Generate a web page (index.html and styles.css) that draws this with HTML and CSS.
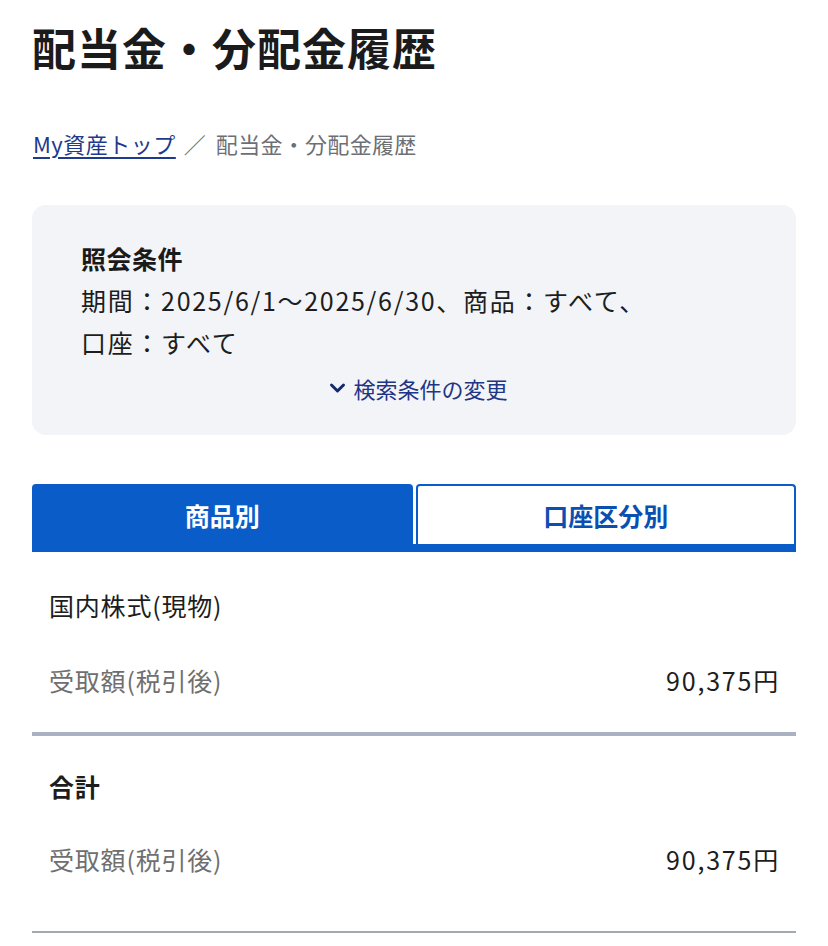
FILE: index.html
```html
<!DOCTYPE html>
<html lang="ja">
<head>
<meta charset="utf-8">
<title>配当金・分配金履歴</title>
<link rel="stylesheet" href="styles.css">
</head>
<body>
<main class="page">
  <h1 class="title">配当金・分配金履歴</h1>
  <nav class="crumbs">
    <a class="crumb-link" href="#">My資産トップ</a>
    <span class="crumb-sep">／</span>
    <span class="crumb-current">配当金・分配金履歴</span>
  </nav>

  <section class="cond">
    <div class="cond-head">照会条件</div>
    <div class="cond-text">期間：2025/6/1〜2025/6/30、商品：すべて、<br>口座：すべて</div>
    <div class="cond-action">
      <a class="cond-link" href="#">
        <svg class="chev" width="17" height="12" viewBox="0 0 17 12"><path d="M2.5 3 L8.5 9 L14.5 3" fill="none" stroke="currentColor" stroke-width="3" stroke-linecap="round" stroke-linejoin="round"/></svg>
        検索条件の変更
      </a>
    </div>
  </section>

  <div class="tabs">
    <button class="tab tab-active">商品別</button>
    <button class="tab">口座区分別</button>
  </div>

  <section class="group group-first">
    <div class="group-title">国内株式(現物)</div>
    <div class="row">
      <span class="row-label">受取額(税引後)</span>
      <span class="row-value">90,375円</span>
    </div>
  </section>

  <section class="group group-total">
    <div class="group-title group-title-bold">合計</div>
    <div class="row">
      <span class="row-label">受取額(税引後)</span>
      <span class="row-value">90,375円</span>
    </div>
  </section>
</main>
</body>
</html>
```

FILE: styles.css
```css
* { box-sizing: border-box; }
html, body { margin: 0; padding: 0; background: #fff; }
body {
  font-family: "Noto Sans CJK JP", "Noto Sans", sans-serif;
  color: #1a1a1a;
}
.page {
  padding: 0 32px;
}
.title {
  margin: 0;
  padding-top: 14px;
  font-size: 44px;
  line-height: 66px;
  font-weight: 700;
  letter-spacing: 1px;
  color: #1b1b1b;
}
.crumbs {
  margin-top: 46px;
  font-size: 22px;
  line-height: 34px;
  display: flex;
  align-items: center;
  gap: 6px;
  padding-left: 1px;
}
.crumb-link {
  color: #1f3a8c;
  text-decoration: underline;
  text-decoration-thickness: 2px;
  text-underline-offset: 4px;
  letter-spacing: 0.5px;
}
.crumb-sep { color: #777; padding: 0 4px 0 2px; }
.crumb-current { color: #6c6f75; letter-spacing: 0.3px; }

.cond {
  margin-top: 45px;
  background: #f3f4f7;
  border-radius: 14px;
  padding: 32px 40px 26px 49px;
  font-size: 25px;
  line-height: 42px;
}
.cond-head { font-weight: 700; letter-spacing: 0.5px; }
.cond-text { color: #1d1d1d; letter-spacing: 1.7px; white-space: nowrap; }
.cond-action { text-align: center; font-size: 22px; }
.cond-link {
  color: #1f3585;
  text-decoration: none;
  display: inline-flex;
  align-items: center;
  gap: 7px;
}
.chev { color: #14296e; }

.tabs {
  margin-top: 49px;
  display: flex;
  gap: 3px;
  border-bottom: 8px solid #0a5dc9;
}
.tab {
  flex: 1;
  height: 60px;
  font-family: inherit;
  font-size: 25px;
  font-weight: 700;
  border: 2px solid #0a5dc9;
  border-bottom: none;
  border-radius: 4px 4px 0 0;
  background: #fff;
  color: #0b4fb0;
  padding: 0;
}
.tab-active {
  background: #0a5dc9;
  color: #fff;
}

.group {
  padding: 35px 18px 34px 17px;
  border-bottom: 4px solid #aab1c2;
}
.group-total {
  padding-top: 32px;
  padding-bottom: 54px;
  border-bottom: 2px solid #a3a9b1;
}
.group-title {
  font-size: 25px;
  line-height: 36px;
  color: #1d1d1d;
  letter-spacing: 0.8px;
}
.group-title-bold { font-weight: 700; }
.row {
  margin-top: 39px;
  display: flex;
  justify-content: space-between;
  align-items: center;
  font-size: 25px;
  line-height: 36px;
}
.group-total .row { margin-top: 37px; }
.row-label { color: #6f6f6f; letter-spacing: 0.8px; }
.row-value { color: #1d1d1d; letter-spacing: 1.8px; margin-right: -2px; }
```
